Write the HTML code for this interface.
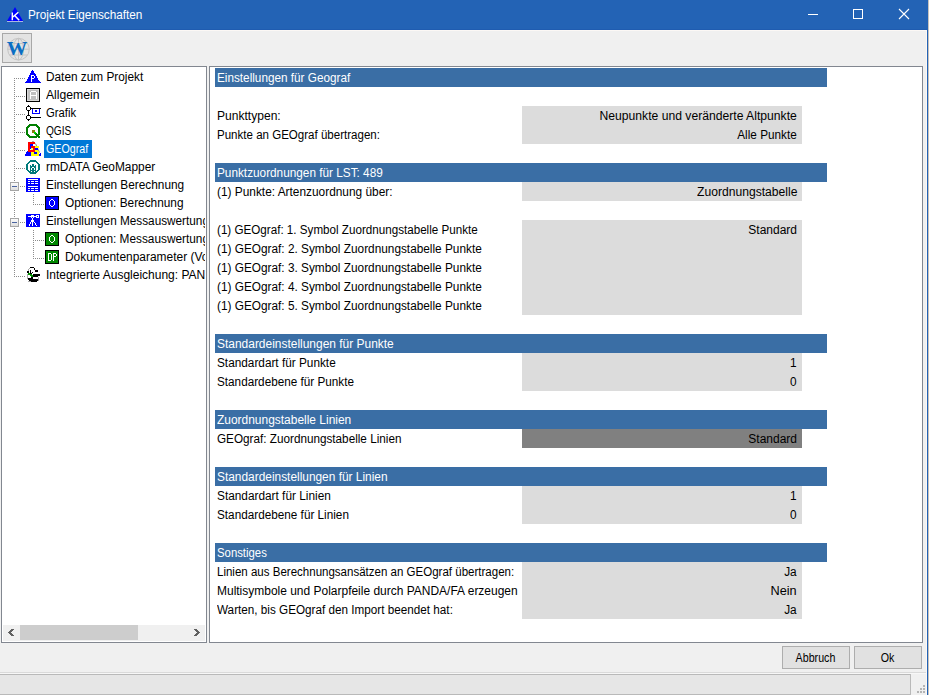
<!DOCTYPE html>
<html><head><meta charset="utf-8"><title>Projekt Eigenschaften</title>
<style>
*{box-sizing:border-box}
html,body{margin:0;padding:0}
body{width:929px;height:695px;position:relative;overflow:hidden;background:#f0f0f0;font-family:"Liberation Sans",sans-serif;font-size:12px;color:#000}
.a{position:absolute}
.s{display:inline-block;white-space:nowrap}
svg{position:absolute;overflow:visible}
#title{left:0;top:0;width:927px;height:30px;background:#2363b5}
#tree{left:1px;top:66px;width:206px;height:577px;border:1px solid #828790;background:#fff}
#tclip{left:0;top:0;width:203px;height:558px;overflow:hidden}
#props{left:209px;top:66px;width:714px;height:577px;border:1px solid #828790;background:#fff}
.hdr{left:5px;width:612px;height:19px;background:#3a6ea5;color:#fff}
.hdr .s,.lbl .s{position:absolute;left:2px;top:1px;line-height:19px}
.lbl{left:5px;height:19px;width:300px}
.val{left:312px;width:280px;background:#dcdcdc}
.v{left:312px;width:280px;height:19px}
.v .s{position:absolute;right:5px;top:1px;line-height:19px}
.ti{height:18px;line-height:18px}
.btn{top:646px;height:23px;border:1px solid #adadad;background:#e1e1e1;font-size:12px}
.btn .s{position:absolute;left:0;right:1px;top:4px;text-align:center;line-height:15px;transform:scaleX(0.89)}
</style></head><body>
<div id="title" class="a">
<svg style="left:0;top:0" width="30" height="30" shape-rendering="crispEdges"><polygon points="15,7 7,21 23,21" fill="#0000ff" shape-rendering="geometricPrecision"/><rect x="7" y="21" width="16" height="1" fill="#aab8e0"/><path d="M12.3 12.5V20.3M12.8 17L18.3 12.2M14.6 15.4L19.2 20.3" stroke="#fff" stroke-width="1.45" fill="none" shape-rendering="geometricPrecision"/></svg>
<div class="a" style="left:28px;top:7px;color:#fff;line-height:16px"><span class="s" style="transform:scaleX(0.98);transform-origin:0 0">Projekt Eigenschaften</span></div>
<svg style="left:800px;top:0" width="127" height="30" shape-rendering="crispEdges"><rect x="8" y="14" width="10" height="1" fill="#fff"/><rect x="53.5" y="9.5" width="9" height="9" fill="none" stroke="#fff" stroke-width="1"/><path d="M99 9L109 19M109 9L99 19" stroke="#fff" stroke-width="1.1" shape-rendering="geometricPrecision"/></svg>
</div>
<div class="a" style="left:927px;top:0;width:1px;height:695px;background:#2363b5"></div>
<div class="a" style="left:928px;top:0;width:1px;height:695px;background:#c8c3be"></div>
<div class="a" style="left:0;top:29px;width:927px;height:1px;background:#1f5cb0"></div>
<div class="a" style="left:0;top:30px;width:927px;height:1px;background:#fcf8f5"></div>
<div class="a" style="left:926px;top:30px;width:1px;height:665px;background:#fcf8f5"></div>
<div class="a" style="left:2px;top:33px;width:30px;height:30px;border:1px solid #a8a8a8;background:#e3e3e3"></div>
<svg style="left:0;top:30px" width="36" height="36"><g fill="none" stroke="#c4c4c4" stroke-width="1"><circle cx="18.5" cy="19.2" r="10.8"/><ellipse cx="18.5" cy="19.2" rx="5" ry="10.8"/><line x1="18.5" y1="8.4" x2="18.5" y2="30"/><line x1="7.7" y1="19.2" x2="29.3" y2="19.2"/><path d="M9.5 13.5H27.5M9.5 25H27.5"/></g><text x="17" y="25" text-anchor="middle" font-family="Liberation Serif" font-weight="bold" font-size="19" fill="#0a6ec4" transform="translate(17 0) scale(1.08 1) translate(-17 0)">W</text></svg>
<div id="tree" class="a"><div id="tclip" class="a">
<div class="a ti" style="left:44px;top:1px"><span class="s" style="transform:scaleX(0.985);transform-origin:0 0">Daten zum Projekt</span></div>
<div class="a ti" style="left:44px;top:19px"><span class="s" style="transform:scaleX(1.015);transform-origin:0 0">Allgemein</span></div>
<div class="a ti" style="left:44px;top:37px"><span class="s" style="transform:scaleX(0.938);transform-origin:0 0">Grafik</span></div>
<div class="a ti" style="left:44px;top:55px"><span class="s" style="transform:scaleX(0.843);transform-origin:0 0">QGIS</span></div>
<div class="a" style="left:42px;top:73px;width:48px;height:18px;background:#0078d7"></div>
<div class="a ti" style="left:44px;top:73px;color:#fff"><span class="s" style="transform:scaleX(0.892);transform-origin:0 0">GEOgraf</span></div>
<div class="a ti" style="left:44px;top:91px"><span class="s" style="transform:scaleX(0.991);transform-origin:0 0">rmDATA GeoMapper</span></div>
<div class="a ti" style="left:44px;top:109px"><span class="s" style="transform:scaleX(0.986);transform-origin:0 0">Einstellungen Berechnung</span></div>
<div class="a ti" style="left:63px;top:127px"><span class="s" style="transform:scaleX(0.987);transform-origin:0 0">Optionen: Berechnung</span></div>
<div class="a ti" style="left:44px;top:145px"><span class="s" style="transform:scaleX(0.981);transform-origin:0 0">Einstellungen Messauswertung</span></div>
<div class="a ti" style="left:63px;top:163px"><span class="s" style="transform:scaleX(0.986);transform-origin:0 0">Optionen: Messauswertung</span></div>
<div class="a ti" style="left:63px;top:181px"><span class="s" style="transform:scaleX(0.995);transform-origin:0 0">Dokumentenparameter (Vorlage)</span></div>
<div class="a ti" style="left:44px;top:199px"><span class="s" style="transform:scaleX(1.0);transform-origin:0 0">Integrierte Ausgleichung: PANDA</span></div>
</div></div>
<svg style="left:0;top:0" width="210" height="300" shape-rendering="crispEdges"><defs><linearGradient id="exg" x1="0" y1="0" x2="0" y2="1"><stop offset="0" stop-color="#fdfdfd"/><stop offset="1" stop-color="#dcdcdc"/></linearGradient></defs><rect x="14" y="78" width="1" height="1" fill="#8c8c8c"/><rect x="14" y="80" width="1" height="1" fill="#8c8c8c"/><rect x="14" y="82" width="1" height="1" fill="#8c8c8c"/><rect x="14" y="84" width="1" height="1" fill="#8c8c8c"/><rect x="14" y="86" width="1" height="1" fill="#8c8c8c"/><rect x="14" y="88" width="1" height="1" fill="#8c8c8c"/><rect x="14" y="90" width="1" height="1" fill="#8c8c8c"/><rect x="14" y="92" width="1" height="1" fill="#8c8c8c"/><rect x="14" y="94" width="1" height="1" fill="#8c8c8c"/><rect x="14" y="96" width="1" height="1" fill="#8c8c8c"/><rect x="14" y="98" width="1" height="1" fill="#8c8c8c"/><rect x="14" y="100" width="1" height="1" fill="#8c8c8c"/><rect x="14" y="102" width="1" height="1" fill="#8c8c8c"/><rect x="14" y="104" width="1" height="1" fill="#8c8c8c"/><rect x="14" y="106" width="1" height="1" fill="#8c8c8c"/><rect x="14" y="108" width="1" height="1" fill="#8c8c8c"/><rect x="14" y="110" width="1" height="1" fill="#8c8c8c"/><rect x="14" y="112" width="1" height="1" fill="#8c8c8c"/><rect x="14" y="114" width="1" height="1" fill="#8c8c8c"/><rect x="14" y="116" width="1" height="1" fill="#8c8c8c"/><rect x="14" y="118" width="1" height="1" fill="#8c8c8c"/><rect x="14" y="120" width="1" height="1" fill="#8c8c8c"/><rect x="14" y="122" width="1" height="1" fill="#8c8c8c"/><rect x="14" y="124" width="1" height="1" fill="#8c8c8c"/><rect x="14" y="126" width="1" height="1" fill="#8c8c8c"/><rect x="14" y="128" width="1" height="1" fill="#8c8c8c"/><rect x="14" y="130" width="1" height="1" fill="#8c8c8c"/><rect x="14" y="132" width="1" height="1" fill="#8c8c8c"/><rect x="14" y="134" width="1" height="1" fill="#8c8c8c"/><rect x="14" y="136" width="1" height="1" fill="#8c8c8c"/><rect x="14" y="138" width="1" height="1" fill="#8c8c8c"/><rect x="14" y="140" width="1" height="1" fill="#8c8c8c"/><rect x="14" y="142" width="1" height="1" fill="#8c8c8c"/><rect x="14" y="144" width="1" height="1" fill="#8c8c8c"/><rect x="14" y="146" width="1" height="1" fill="#8c8c8c"/><rect x="14" y="148" width="1" height="1" fill="#8c8c8c"/><rect x="14" y="150" width="1" height="1" fill="#8c8c8c"/><rect x="14" y="152" width="1" height="1" fill="#8c8c8c"/><rect x="14" y="154" width="1" height="1" fill="#8c8c8c"/><rect x="14" y="156" width="1" height="1" fill="#8c8c8c"/><rect x="14" y="158" width="1" height="1" fill="#8c8c8c"/><rect x="14" y="160" width="1" height="1" fill="#8c8c8c"/><rect x="14" y="162" width="1" height="1" fill="#8c8c8c"/><rect x="14" y="164" width="1" height="1" fill="#8c8c8c"/><rect x="14" y="166" width="1" height="1" fill="#8c8c8c"/><rect x="14" y="168" width="1" height="1" fill="#8c8c8c"/><rect x="14" y="170" width="1" height="1" fill="#8c8c8c"/><rect x="14" y="172" width="1" height="1" fill="#8c8c8c"/><rect x="14" y="174" width="1" height="1" fill="#8c8c8c"/><rect x="14" y="176" width="1" height="1" fill="#8c8c8c"/><rect x="14" y="178" width="1" height="1" fill="#8c8c8c"/><rect x="14" y="180" width="1" height="1" fill="#8c8c8c"/><rect x="14" y="192" width="1" height="1" fill="#8c8c8c"/><rect x="14" y="194" width="1" height="1" fill="#8c8c8c"/><rect x="14" y="196" width="1" height="1" fill="#8c8c8c"/><rect x="14" y="198" width="1" height="1" fill="#8c8c8c"/><rect x="14" y="200" width="1" height="1" fill="#8c8c8c"/><rect x="14" y="202" width="1" height="1" fill="#8c8c8c"/><rect x="14" y="204" width="1" height="1" fill="#8c8c8c"/><rect x="14" y="206" width="1" height="1" fill="#8c8c8c"/><rect x="14" y="208" width="1" height="1" fill="#8c8c8c"/><rect x="14" y="210" width="1" height="1" fill="#8c8c8c"/><rect x="14" y="212" width="1" height="1" fill="#8c8c8c"/><rect x="14" y="214" width="1" height="1" fill="#8c8c8c"/><rect x="14" y="216" width="1" height="1" fill="#8c8c8c"/><rect x="14" y="228" width="1" height="1" fill="#8c8c8c"/><rect x="14" y="230" width="1" height="1" fill="#8c8c8c"/><rect x="14" y="232" width="1" height="1" fill="#8c8c8c"/><rect x="14" y="234" width="1" height="1" fill="#8c8c8c"/><rect x="14" y="236" width="1" height="1" fill="#8c8c8c"/><rect x="14" y="238" width="1" height="1" fill="#8c8c8c"/><rect x="14" y="240" width="1" height="1" fill="#8c8c8c"/><rect x="14" y="242" width="1" height="1" fill="#8c8c8c"/><rect x="14" y="244" width="1" height="1" fill="#8c8c8c"/><rect x="14" y="246" width="1" height="1" fill="#8c8c8c"/><rect x="14" y="248" width="1" height="1" fill="#8c8c8c"/><rect x="14" y="250" width="1" height="1" fill="#8c8c8c"/><rect x="14" y="252" width="1" height="1" fill="#8c8c8c"/><rect x="14" y="254" width="1" height="1" fill="#8c8c8c"/><rect x="14" y="256" width="1" height="1" fill="#8c8c8c"/><rect x="14" y="258" width="1" height="1" fill="#8c8c8c"/><rect x="14" y="260" width="1" height="1" fill="#8c8c8c"/><rect x="14" y="262" width="1" height="1" fill="#8c8c8c"/><rect x="14" y="264" width="1" height="1" fill="#8c8c8c"/><rect x="14" y="266" width="1" height="1" fill="#8c8c8c"/><rect x="14" y="268" width="1" height="1" fill="#8c8c8c"/><rect x="14" y="270" width="1" height="1" fill="#8c8c8c"/><rect x="14" y="272" width="1" height="1" fill="#8c8c8c"/><rect x="14" y="274" width="1" height="1" fill="#8c8c8c"/><rect x="14" y="276" width="1" height="1" fill="#8c8c8c"/><rect x="14" y="78" width="1" height="1" fill="#8c8c8c"/><rect x="16" y="78" width="1" height="1" fill="#8c8c8c"/><rect x="18" y="78" width="1" height="1" fill="#8c8c8c"/><rect x="20" y="78" width="1" height="1" fill="#8c8c8c"/><rect x="22" y="78" width="1" height="1" fill="#8c8c8c"/><rect x="24" y="78" width="1" height="1" fill="#8c8c8c"/><rect x="14" y="96" width="1" height="1" fill="#8c8c8c"/><rect x="16" y="96" width="1" height="1" fill="#8c8c8c"/><rect x="18" y="96" width="1" height="1" fill="#8c8c8c"/><rect x="20" y="96" width="1" height="1" fill="#8c8c8c"/><rect x="22" y="96" width="1" height="1" fill="#8c8c8c"/><rect x="24" y="96" width="1" height="1" fill="#8c8c8c"/><rect x="14" y="114" width="1" height="1" fill="#8c8c8c"/><rect x="16" y="114" width="1" height="1" fill="#8c8c8c"/><rect x="18" y="114" width="1" height="1" fill="#8c8c8c"/><rect x="20" y="114" width="1" height="1" fill="#8c8c8c"/><rect x="22" y="114" width="1" height="1" fill="#8c8c8c"/><rect x="24" y="114" width="1" height="1" fill="#8c8c8c"/><rect x="14" y="132" width="1" height="1" fill="#8c8c8c"/><rect x="16" y="132" width="1" height="1" fill="#8c8c8c"/><rect x="18" y="132" width="1" height="1" fill="#8c8c8c"/><rect x="20" y="132" width="1" height="1" fill="#8c8c8c"/><rect x="22" y="132" width="1" height="1" fill="#8c8c8c"/><rect x="24" y="132" width="1" height="1" fill="#8c8c8c"/><rect x="14" y="150" width="1" height="1" fill="#8c8c8c"/><rect x="16" y="150" width="1" height="1" fill="#8c8c8c"/><rect x="18" y="150" width="1" height="1" fill="#8c8c8c"/><rect x="20" y="150" width="1" height="1" fill="#8c8c8c"/><rect x="22" y="150" width="1" height="1" fill="#8c8c8c"/><rect x="24" y="150" width="1" height="1" fill="#8c8c8c"/><rect x="14" y="168" width="1" height="1" fill="#8c8c8c"/><rect x="16" y="168" width="1" height="1" fill="#8c8c8c"/><rect x="18" y="168" width="1" height="1" fill="#8c8c8c"/><rect x="20" y="168" width="1" height="1" fill="#8c8c8c"/><rect x="22" y="168" width="1" height="1" fill="#8c8c8c"/><rect x="24" y="168" width="1" height="1" fill="#8c8c8c"/><rect x="20" y="186" width="1" height="1" fill="#8c8c8c"/><rect x="22" y="186" width="1" height="1" fill="#8c8c8c"/><rect x="24" y="186" width="1" height="1" fill="#8c8c8c"/><rect x="33" y="204" width="1" height="1" fill="#8c8c8c"/><rect x="35" y="204" width="1" height="1" fill="#8c8c8c"/><rect x="37" y="204" width="1" height="1" fill="#8c8c8c"/><rect x="39" y="204" width="1" height="1" fill="#8c8c8c"/><rect x="41" y="204" width="1" height="1" fill="#8c8c8c"/><rect x="43" y="204" width="1" height="1" fill="#8c8c8c"/><rect x="20" y="222" width="1" height="1" fill="#8c8c8c"/><rect x="22" y="222" width="1" height="1" fill="#8c8c8c"/><rect x="24" y="222" width="1" height="1" fill="#8c8c8c"/><rect x="33" y="240" width="1" height="1" fill="#8c8c8c"/><rect x="35" y="240" width="1" height="1" fill="#8c8c8c"/><rect x="37" y="240" width="1" height="1" fill="#8c8c8c"/><rect x="39" y="240" width="1" height="1" fill="#8c8c8c"/><rect x="41" y="240" width="1" height="1" fill="#8c8c8c"/><rect x="43" y="240" width="1" height="1" fill="#8c8c8c"/><rect x="33" y="258" width="1" height="1" fill="#8c8c8c"/><rect x="35" y="258" width="1" height="1" fill="#8c8c8c"/><rect x="37" y="258" width="1" height="1" fill="#8c8c8c"/><rect x="39" y="258" width="1" height="1" fill="#8c8c8c"/><rect x="41" y="258" width="1" height="1" fill="#8c8c8c"/><rect x="43" y="258" width="1" height="1" fill="#8c8c8c"/><rect x="14" y="276" width="1" height="1" fill="#8c8c8c"/><rect x="16" y="276" width="1" height="1" fill="#8c8c8c"/><rect x="18" y="276" width="1" height="1" fill="#8c8c8c"/><rect x="20" y="276" width="1" height="1" fill="#8c8c8c"/><rect x="22" y="276" width="1" height="1" fill="#8c8c8c"/><rect x="24" y="276" width="1" height="1" fill="#8c8c8c"/><rect x="33" y="194" width="1" height="1" fill="#8c8c8c"/><rect x="33" y="196" width="1" height="1" fill="#8c8c8c"/><rect x="33" y="198" width="1" height="1" fill="#8c8c8c"/><rect x="33" y="200" width="1" height="1" fill="#8c8c8c"/><rect x="33" y="202" width="1" height="1" fill="#8c8c8c"/><rect x="33" y="204" width="1" height="1" fill="#8c8c8c"/><rect x="33" y="230" width="1" height="1" fill="#8c8c8c"/><rect x="33" y="232" width="1" height="1" fill="#8c8c8c"/><rect x="33" y="234" width="1" height="1" fill="#8c8c8c"/><rect x="33" y="236" width="1" height="1" fill="#8c8c8c"/><rect x="33" y="238" width="1" height="1" fill="#8c8c8c"/><rect x="33" y="240" width="1" height="1" fill="#8c8c8c"/><rect x="33" y="242" width="1" height="1" fill="#8c8c8c"/><rect x="33" y="244" width="1" height="1" fill="#8c8c8c"/><rect x="33" y="246" width="1" height="1" fill="#8c8c8c"/><rect x="33" y="248" width="1" height="1" fill="#8c8c8c"/><rect x="33" y="250" width="1" height="1" fill="#8c8c8c"/><rect x="33" y="252" width="1" height="1" fill="#8c8c8c"/><rect x="33" y="254" width="1" height="1" fill="#8c8c8c"/><rect x="33" y="256" width="1" height="1" fill="#8c8c8c"/><rect x="33" y="258" width="1" height="1" fill="#8c8c8c"/><rect x="10.5" y="182.5" width="8" height="8" rx="1" fill="url(#exg)" stroke="#a6a6a6"/><rect x="12" y="186" width="5" height="1" fill="#4a64a0"/><rect x="10.5" y="218.5" width="8" height="8" rx="1" fill="url(#exg)" stroke="#a6a6a6"/><rect x="12" y="222" width="5" height="1" fill="#4a64a0"/><rect x="32" y="70" width="1" height="1" fill="#0000ff"/><rect x="31" y="71" width="3" height="1" fill="#0000ff"/><rect x="31" y="72" width="3" height="1" fill="#0000ff"/><rect x="30" y="73" width="5" height="1" fill="#0000ff"/><rect x="30" y="74" width="6" height="1" fill="#0000ff"/><rect x="29" y="75" width="7" height="1" fill="#0000ff"/><rect x="29" y="76" width="8" height="1" fill="#0000ff"/><rect x="28" y="77" width="9" height="1" fill="#0000ff"/><rect x="28" y="78" width="10" height="1" fill="#0000ff"/><rect x="27" y="79" width="11" height="1" fill="#0000ff"/><rect x="27" y="80" width="12" height="1" fill="#0000ff"/><rect x="26" y="81" width="14" height="1" fill="#0000ff"/><rect x="25" y="82" width="16" height="1" fill="#0000ff"/><rect x="31" y="75" width="1" height="7" fill="#fff"/><rect x="31" y="75" width="3" height="1" fill="#fff"/><rect x="34" y="76" width="1" height="2" fill="#fff"/><rect x="31" y="78" width="3" height="1" fill="#fff"/><rect x="26" y="88" width="14" height="14" fill="#000"/><rect x="27" y="89" width="12" height="12" fill="#d8d8d8"/><rect x="28" y="90" width="10" height="10" fill="#c0c0c0"/><rect x="31" y="91" width="5" height="1" fill="#fff"/><rect x="30" y="92" width="1" height="7" fill="#fff"/><rect x="36" y="92" width="1" height="7" fill="#fff"/><rect x="30" y="95" width="7" height="1" fill="#fff"/><rect x="27" y="106" width="3" height="5" fill="#fff"/><rect x="27" y="115" width="3" height="5" fill="#fff"/><rect x="27" y="106" width="3" height="1" fill="#000"/><rect x="26" y="107" width="1" height="3" fill="#000"/><rect x="30" y="107" width="1" height="3" fill="#000"/><rect x="27" y="110" width="3" height="1" fill="#000"/><rect x="27" y="115" width="3" height="1" fill="#000"/><rect x="26" y="116" width="1" height="3" fill="#000"/><rect x="30" y="116" width="1" height="3" fill="#000"/><rect x="27" y="119" width="3" height="1" fill="#000"/><rect x="28" y="105" width="1" height="1" fill="#000"/><rect x="28" y="120" width="1" height="1" fill="#000"/><rect x="28" y="111" width="1" height="4" fill="#000"/><rect x="31" y="108" width="10" height="1" fill="#000"/><rect x="31" y="117" width="10" height="1" fill="#000"/><rect x="32.5" y="108.5" width="7" height="5" fill="none" stroke="#0000ff"/><rect x="35" y="110" width="2" height="2" fill="#0000ff"/><rect x="31" y="108" width="10" height="1" fill="#000"/><path d="M30 125H36L39 128V134L36 137H30L27 134V128Z" fill="none" stroke="#008000" stroke-width="2"/><rect x="32" y="130" width="3" height="3" fill="#8a7a10"/><rect x="34" y="132" width="2" height="2" fill="#00e000"/><rect x="35" y="133" width="2" height="2" fill="#00c000"/><path d="M36 134L40 138" stroke="#008000" stroke-width="2.2"/><rect x="32" y="141" width="2" height="1" fill="#a8a8a8"/><path d="M35.5 143.5L39.5 152.5" stroke="#8c8c8c" stroke-width="1" shape-rendering="geometricPrecision"/><rect x="27" y="151" width="3" height="1" fill="#0000ff"/><rect x="26" y="152" width="6" height="2" fill="#0000ff"/><rect x="25" y="154" width="7" height="2" fill="#0000ff"/><rect x="40" y="153" width="1" height="1" fill="#0000ff"/><rect x="39" y="154" width="2" height="2" fill="#0000ff"/><rect x="34" y="146" width="5" height="2" fill="#ffff00"/><rect x="34" y="148" width="1" height="2" fill="#ffff00"/><rect x="34" y="150" width="4" height="2" fill="#ffff00"/><rect x="37" y="151" width="2" height="3" fill="#ffff00"/><rect x="31" y="154" width="8" height="2" fill="#ffff00"/><rect x="31" y="152" width="3" height="2" fill="#ffff00"/><rect x="35" y="148" width="3" height="2" fill="#0000ff"/><rect x="34" y="152" width="3" height="2" fill="#0000ff"/><rect x="28" y="142" width="7" height="2" fill="#ff0000"/><rect x="28" y="144" width="2" height="8" fill="#ff0000"/><rect x="28" y="150" width="7" height="2" fill="#ff0000"/><rect x="33" y="146" width="2" height="4" fill="#ff0000"/><rect x="31" y="146" width="2" height="2" fill="#ff0000"/><rect x="30" y="144" width="3" height="2" fill="#0000ff"/><rect x="30" y="146" width="1" height="3" fill="#0000ff"/><rect x="31" y="148" width="2" height="2" fill="#ffff60"/><path d="M30.5 161H35.5L39 164.5V169.5L35.5 173H30.5L27 169.5V164.5Z" fill="none" stroke="#007a7a" stroke-width="2"/><rect x="30" y="165" width="6" height="8" fill="#007a7a"/><rect x="32" y="164" width="2" height="1" fill="#007a7a"/><rect x="31" y="165" width="1" height="1" fill="#fff"/><rect x="34" y="165" width="1" height="1" fill="#fff"/><rect x="32" y="167" width="2" height="1" fill="#fff"/><rect x="31" y="168" width="1" height="2" fill="#fff"/><rect x="34" y="168" width="1" height="2" fill="#fff"/><rect x="31" y="171" width="1" height="1" fill="#fff"/><rect x="34" y="171" width="1" height="1" fill="#fff"/><rect x="26" y="178" width="14" height="14" fill="#0000ff"/><rect x="28" y="179" width="10" height="1" fill="#fff"/><rect x="28" y="186" width="10" height="1" fill="#fff"/><rect x="28" y="181" width="2" height="1" fill="#fff"/><rect x="31" y="181" width="3" height="1" fill="#fff"/><rect x="35" y="181" width="3" height="1" fill="#fff"/><rect x="28" y="183" width="2" height="1" fill="#fff"/><rect x="31" y="183" width="3" height="1" fill="#fff"/><rect x="35" y="183" width="3" height="1" fill="#fff"/><rect x="28" y="188" width="2" height="1" fill="#fff"/><rect x="31" y="188" width="3" height="1" fill="#fff"/><rect x="35" y="188" width="3" height="1" fill="#fff"/><rect x="28" y="190" width="2" height="1" fill="#fff"/><rect x="31" y="190" width="3" height="1" fill="#fff"/><rect x="35" y="190" width="3" height="1" fill="#fff"/><rect x="45" y="196" width="14" height="14" fill="#000"/><rect x="46" y="197" width="12" height="12" fill="#0000ff"/><rect x="51" y="199" width="2" height="1" fill="#fff"/><rect x="50" y="200" width="1" height="1" fill="#fff"/><rect x="53" y="200" width="1" height="1" fill="#fff"/><rect x="49" y="201" width="1" height="4" fill="#fff"/><rect x="54" y="201" width="1" height="4" fill="#fff"/><rect x="50" y="205" width="1" height="1" fill="#fff"/><rect x="53" y="205" width="1" height="1" fill="#fff"/><rect x="51" y="206" width="2" height="1" fill="#fff"/><rect x="26" y="214" width="14" height="13" fill="#0000ff"/><rect x="28" y="216" width="9" height="1" fill="#fff"/><rect x="31" y="215" width="3" height="1" fill="#fff"/><rect x="36" y="215" width="3" height="1" fill="#fff"/><rect x="36" y="217" width="3" height="1" fill="#fff"/><rect x="38" y="216" width="1" height="1" fill="#fff"/><rect x="31" y="217" width="1" height="1" fill="#fff"/><rect x="33" y="217" width="1" height="1" fill="#fff"/><rect x="32" y="218" width="1" height="2" fill="#fff"/><rect x="31" y="220" width="3" height="2" fill="#fff"/><rect x="32" y="222" width="1" height="4" fill="#fff"/><rect x="30" y="222" width="1" height="2" fill="#fff"/><rect x="29" y="224" width="1" height="2" fill="#fff"/><rect x="34" y="222" width="1" height="1" fill="#fff"/><rect x="35" y="223" width="1" height="2" fill="#fff"/><rect x="36" y="225" width="1" height="1" fill="#fff"/><rect x="45" y="232" width="14" height="14" fill="#000"/><rect x="46" y="233" width="12" height="12" fill="#008800"/><rect x="51" y="235" width="2" height="1" fill="#fff"/><rect x="50" y="236" width="1" height="1" fill="#fff"/><rect x="53" y="236" width="1" height="1" fill="#fff"/><rect x="49" y="237" width="1" height="4" fill="#fff"/><rect x="54" y="237" width="1" height="4" fill="#fff"/><rect x="50" y="241" width="1" height="1" fill="#fff"/><rect x="53" y="241" width="1" height="1" fill="#fff"/><rect x="51" y="242" width="2" height="1" fill="#fff"/><rect x="45" y="250" width="14" height="14" fill="#000"/><rect x="46" y="251" width="12" height="12" fill="#008800"/><rect x="48" y="253" width="3" height="1" fill="#fff"/><rect x="48" y="254" width="1" height="6" fill="#fff"/><rect x="48" y="260" width="3" height="1" fill="#fff"/><rect x="51" y="254" width="1" height="6" fill="#fff"/><rect x="53" y="253" width="3" height="1" fill="#fff"/><rect x="53" y="254" width="1" height="7" fill="#fff"/><rect x="56" y="254" width="1" height="2" fill="#fff"/><rect x="53" y="256" width="3" height="1" fill="#fff"/><rect x="28" y="268" width="10" height="14" fill="#fff"/><rect x="29" y="268" width="1" height="1" fill="#a8a8a8"/><rect x="28" y="269" width="1" height="2" fill="#a8a8a8"/><rect x="27" y="274" width="1" height="5" fill="#a8a8a8"/><rect x="38" y="277" width="1" height="4" fill="#a8a8a8"/><rect x="28" y="281" width="3" height="1" fill="#a8a8a8"/><rect x="30" y="267" width="4" height="1" fill="#000"/><rect x="34" y="268" width="1" height="2" fill="#000"/><rect x="35" y="270" width="3" height="2" fill="#000"/><rect x="27" y="271" width="2" height="2" fill="#000"/><rect x="30" y="270" width="1" height="3" fill="#000"/><rect x="32" y="272" width="1" height="1" fill="#000"/><rect x="30" y="273" width="2" height="1" fill="#000"/><rect x="33" y="274" width="5" height="3" fill="#000"/><rect x="38" y="274" width="2" height="2" fill="#000"/><rect x="31" y="277" width="2" height="1" fill="#000"/><rect x="28" y="278" width="5" height="2" fill="#000"/><rect x="29" y="280" width="3" height="1" fill="#000"/><rect x="32" y="279" width="6" height="2" fill="#000"/><rect x="31" y="281" width="6" height="1" fill="#000"/><rect x="28" y="273" width="2" height="1" fill="#009000"/><rect x="28" y="274" width="4" height="1" fill="#009000"/><rect x="30" y="275" width="3" height="1" fill="#009000"/><rect x="31" y="276" width="2" height="1" fill="#009000"/></svg>
<div class="a" style="left:3px;top:625px;width:202px;height:16px;background:#f0f0f0"></div>
<div class="a" style="left:20px;top:625px;width:118px;height:15px;background:#cdcdcd"></div>
<svg style="left:0;top:0" width="210" height="650" shape-rendering="crispEdges"><rect x="11" y="629" width="3" height="1" fill="#606060"/><rect x="194" y="629" width="3" height="1" fill="#606060"/><rect x="10" y="630" width="3" height="1" fill="#606060"/><rect x="195" y="630" width="3" height="1" fill="#606060"/><rect x="9" y="631" width="3" height="1" fill="#606060"/><rect x="196" y="631" width="3" height="1" fill="#606060"/><rect x="8" y="632" width="3" height="1" fill="#606060"/><rect x="197" y="632" width="3" height="1" fill="#606060"/><rect x="9" y="633" width="3" height="1" fill="#606060"/><rect x="196" y="633" width="3" height="1" fill="#606060"/><rect x="10" y="634" width="3" height="1" fill="#606060"/><rect x="195" y="634" width="3" height="1" fill="#606060"/><rect x="11" y="635" width="3" height="1" fill="#606060"/><rect x="194" y="635" width="3" height="1" fill="#606060"/></svg>
<div id="props" class="a">
<div class="a val" style="top:39px;height:38px;background:#dcdcdc"></div>
<div class="a val" style="top:115px;height:19px;background:#dcdcdc"></div>
<div class="a val" style="top:153px;height:95px;background:#dcdcdc"></div>
<div class="a val" style="top:286px;height:38px;background:#dcdcdc"></div>
<div class="a val" style="top:362px;height:19px;background:#808080"></div>
<div class="a val" style="top:419px;height:38px;background:#dcdcdc"></div>
<div class="a val" style="top:495px;height:57px;background:#dcdcdc"></div>
<div class="a hdr" style="top:1px"><span class="s" style="transform:scaleX(0.979);transform-origin:0 0">Einstellungen für Geograf</span></div>
<div class="a lbl" style="top:39px"><span class="s" style="transform:scaleX(1.005);transform-origin:0 0">Punkttypen:</span></div>
<div class="a v" style="top:39px"><span class="s" style="transform:scaleX(1.013);transform-origin:100% 0">Neupunkte und veränderte Altpunkte</span></div>
<div class="a lbl" style="top:58px"><span class="s" style="transform:scaleX(0.962);transform-origin:0 0">Punkte an GEOgraf übertragen:</span></div>
<div class="a v" style="top:58px"><span class="s" style="transform:scaleX(0.979);transform-origin:100% 0">Alle Punkte</span></div>
<div class="a hdr" style="top:96px"><span class="s" style="transform:scaleX(0.982);transform-origin:0 0">Punktzuordnungen für LST: 489</span></div>
<div class="a lbl" style="top:115px"><span class="s" style="transform:scaleX(0.989);transform-origin:0 0">(1) Punkte: Artenzuordnung über:</span></div>
<div class="a v" style="top:115px"><span class="s" style="transform:scaleX(1.01);transform-origin:100% 0">Zuordnungstabelle</span></div>
<div class="a lbl" style="top:153px"><span class="s" style="transform:scaleX(0.97);transform-origin:0 0">(1) GEOgraf: 1. Symbol Zuordnungstabelle Punkte</span></div>
<div class="a v" style="top:153px"><span class="s" style="transform:scaleX(1.0);transform-origin:100% 0">Standard</span></div>
<div class="a lbl" style="top:172px"><span class="s" style="transform:scaleX(0.985);transform-origin:0 0">(1) GEOgraf: 2. Symbol Zuordnungstabelle Punkte</span></div>
<div class="a lbl" style="top:191px"><span class="s" style="transform:scaleX(0.985);transform-origin:0 0">(1) GEOgraf: 3. Symbol Zuordnungstabelle Punkte</span></div>
<div class="a lbl" style="top:210px"><span class="s" style="transform:scaleX(0.985);transform-origin:0 0">(1) GEOgraf: 4. Symbol Zuordnungstabelle Punkte</span></div>
<div class="a lbl" style="top:229px"><span class="s" style="transform:scaleX(0.985);transform-origin:0 0">(1) GEOgraf: 5. Symbol Zuordnungstabelle Punkte</span></div>
<div class="a hdr" style="top:267px"><span class="s" style="transform:scaleX(0.996);transform-origin:0 0">Standardeinstellungen für Punkte</span></div>
<div class="a lbl" style="top:286px"><span class="s" style="transform:scaleX(0.983);transform-origin:0 0">Standardart für Punkte</span></div>
<div class="a v" style="top:286px"><span class="s" style="transform:scaleX(0.985);transform-origin:100% 0">1</span></div>
<div class="a lbl" style="top:305px"><span class="s" style="transform:scaleX(0.978);transform-origin:0 0">Standardebene für Punkte</span></div>
<div class="a v" style="top:305px"><span class="s" style="transform:scaleX(0.985);transform-origin:100% 0">0</span></div>
<div class="a hdr" style="top:343px"><span class="s" style="transform:scaleX(0.996);transform-origin:0 0">Zuordnungstabelle Linien</span></div>
<div class="a lbl" style="top:362px"><span class="s" style="transform:scaleX(0.977);transform-origin:0 0">GEOgraf: Zuordnungstabelle Linien</span></div>
<div class="a v" style="top:362px"><span class="s" style="transform:scaleX(1.0);transform-origin:100% 0">Standard</span></div>
<div class="a hdr" style="top:400px"><span class="s" style="transform:scaleX(0.991);transform-origin:0 0">Standardeinstellungen für Linien</span></div>
<div class="a lbl" style="top:419px"><span class="s" style="transform:scaleX(0.986);transform-origin:0 0">Standardart für Linien</span></div>
<div class="a v" style="top:419px"><span class="s" style="transform:scaleX(0.985);transform-origin:100% 0">1</span></div>
<div class="a lbl" style="top:438px"><span class="s" style="transform:scaleX(0.979);transform-origin:0 0">Standardebene für Linien</span></div>
<div class="a v" style="top:438px"><span class="s" style="transform:scaleX(0.985);transform-origin:100% 0">0</span></div>
<div class="a hdr" style="top:476px"><span class="s" style="transform:scaleX(0.946);transform-origin:0 0">Sonstiges</span></div>
<div class="a lbl" style="top:495px"><span class="s" style="transform:scaleX(0.96);transform-origin:0 0">Linien aus Berechnungsansätzen an GEOgraf übertragen:</span></div>
<div class="a v" style="top:495px"><span class="s" style="transform:scaleX(0.985);transform-origin:100% 0">Ja</span></div>
<div class="a lbl" style="top:514px"><span class="s" style="transform:scaleX(0.998);transform-origin:0 0">Multisymbole und Polarpfeile durch PANDA/FA erzeugen</span></div>
<div class="a v" style="top:514px"><span class="s" style="transform:scaleX(1.061);transform-origin:100% 0">Nein</span></div>
<div class="a lbl" style="top:533px"><span class="s" style="transform:scaleX(0.976);transform-origin:0 0">Warten, bis GEOgraf den Import beendet hat:</span></div>
<div class="a v" style="top:533px"><span class="s" style="transform:scaleX(0.985);transform-origin:100% 0">Ja</span></div>
</div>
<div class="a btn" style="left:782px;width:68px"><span class="s">Abbruch</span></div>
<div class="a btn" style="left:854px;width:68px"><span class="s">Ok</span></div>
<div class="a" style="left:0;top:672px;width:926px;height:1px;background:#dadada"></div>
<div class="a" style="left:0;top:673px;width:926px;height:1px;background:#f7f7f7"></div>
<div class="a" style="left:0;top:674px;width:911px;height:21px;border:1px solid #b9b9b9;border-left:0;background:#e6e6e6"></div>
<svg style="left:0;top:0" width="929" height="695" shape-rendering="crispEdges"><rect x="923" y="685" width="2" height="2" fill="#b4b4b4"/><rect x="920" y="688" width="2" height="2" fill="#b4b4b4"/><rect x="923" y="688" width="2" height="2" fill="#b4b4b4"/><rect x="917" y="691" width="2" height="2" fill="#b4b4b4"/><rect x="920" y="691" width="2" height="2" fill="#b4b4b4"/><rect x="923" y="691" width="2" height="2" fill="#b4b4b4"/></svg>
</body></html>
